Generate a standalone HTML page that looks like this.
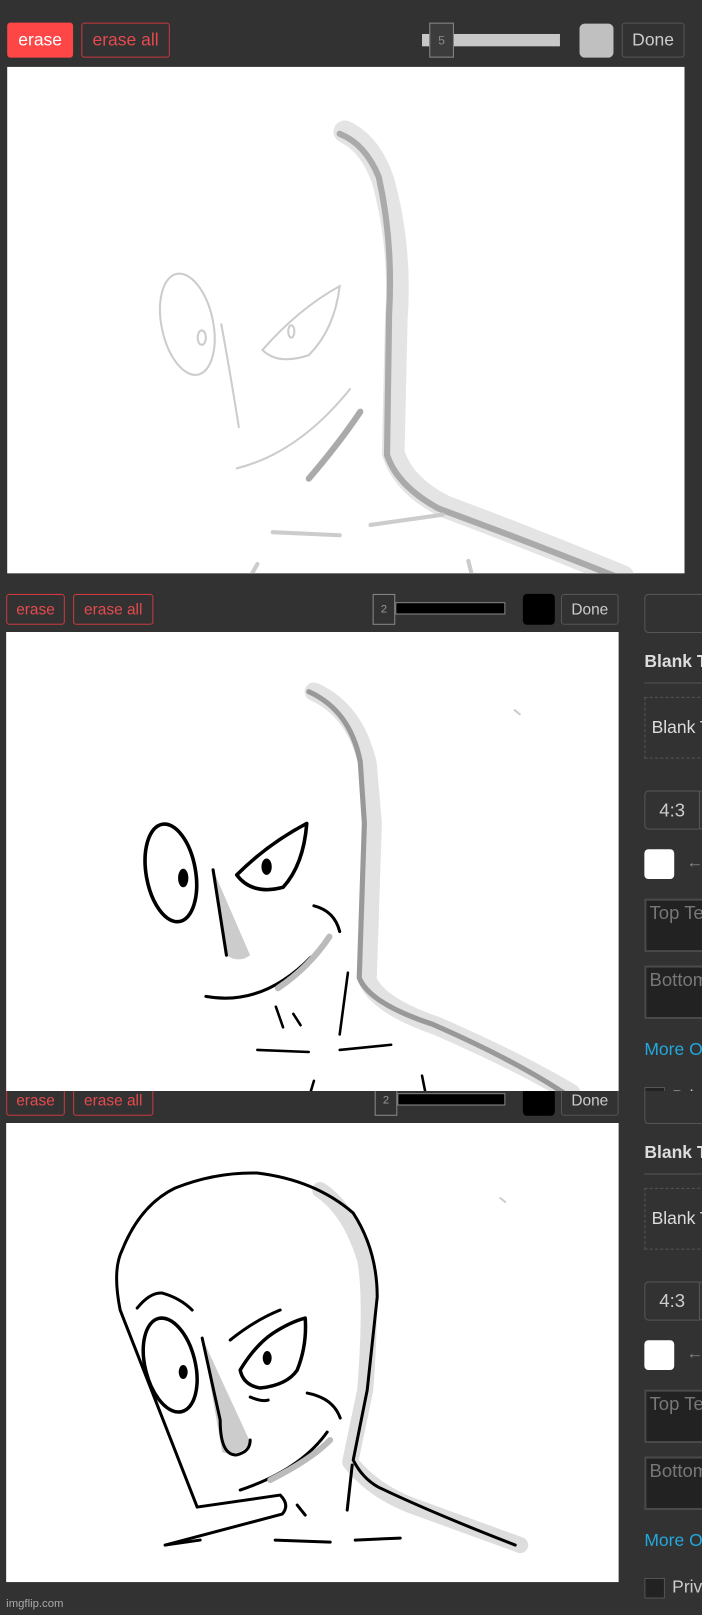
<!DOCTYPE html>
<html><head><meta charset="utf-8"><style>
*{box-sizing:border-box;margin:0;padding:0}
body{width:702px;height:1615px;background:#323232;overflow:hidden;font-family:"Liberation Sans",sans-serif}
#w{position:absolute;left:0;top:0;width:682px;height:1569px;transform:scale(1.02933);transform-origin:0 0}
.a{position:absolute}
.btn{position:absolute;border:1px solid #555;border-radius:3px;color:#ccc;display:flex;align-items:center;justify-content:center}
.red{border-color:#c9393e;color:#e64a4e}
.cv{position:absolute;background:#fff;overflow:hidden}
.cv svg{position:absolute;left:0;top:0;width:100%;height:100%}
.panel{position:absolute;left:0;width:682px;height:520px}
.ta{position:absolute;left:626px;width:80px;height:52px;background:#222;border:2px solid #4a4a4a;color:#777;font-size:18px;padding:2px 3px;white-space:nowrap;overflow:hidden}
</style></head><body><div id="w">
<!-- bar 1 -->
<div class="btn" style="left:7px;top:22px;width:64px;height:34px;background:#ff4646;border-color:#ff4646;color:#fff;font-size:17px">erase</div>
<div class="btn red" style="left:79px;top:22px;width:86px;height:34px;font-size:17px">erase all</div>
<div class="a" style="left:410px;top:33px;width:134px;height:12px;background:#c8c8c8"></div>
<div class="a" style="left:417px;top:22px;width:24px;height:34px;border:1px solid #888;background:#3c3c3c;color:#888;font-size:12px;text-align:center;line-height:32px">5</div>
<div class="a" style="left:563px;top:23px;width:33px;height:33px;background:#c0c0c0;border-radius:5px"></div>
<div class="btn" style="left:604px;top:22px;width:61px;height:34px;font-size:17px">Done</div>
<div class="cv" style="left:7px;top:65px;width:658px;height:492px">
<svg viewBox="7 65 658 492" fill="none" stroke-linecap="round">
<path d="M335,128 Q360,140 372,175 Q390,240 385,310 L382,440 Q392,472 432,492 Q520,525 605,560" stroke="#e4e4e4" stroke-width="22"/>
<path d="M330,130 Q355,140 368,172 Q382,235 378,305 L376,442 Q386,472 426,494 Q515,527 598,560" stroke="#aaa" stroke-width="6"/>
<ellipse cx="182" cy="315" rx="25" ry="50" stroke="#ccc" stroke-width="2" transform="rotate(-12 182 315)"/>
<ellipse cx="196" cy="328" rx="4" ry="7" stroke="#ccc" stroke-width="2"/>
<path d="M255,340 Q290,300 330,278 Q325,320 300,345 Q270,355 255,340Z" stroke="#ccc" stroke-width="2"/>
<ellipse cx="283" cy="322" rx="3" ry="6" stroke="#ccc" stroke-width="2"/>
<path d="M215,315 Q225,370 232,415" stroke="#ccc" stroke-width="2"/>
<path d="M230,455 Q290,440 340,378" stroke="#ccc" stroke-width="2"/>
<path d="M300,465 Q330,430 350,400" stroke="#aaa" stroke-width="6"/>
<path d="M265,517 L330,520 M360,510 L430,500 M245,557 L250,548 M455,545 L458,557" stroke="#ccc" stroke-width="4"/>
</svg></div>

<!-- panel 2 -->
<div class="panel" style="top:558px;height:502px;overflow:hidden">
<div class="btn red" style="left:6px;top:19px;width:57px;height:30px;font-size:15px">erase</div>
<div class="btn red" style="left:71px;top:19px;width:78px;height:30px;font-size:15px">erase all</div>
<div class="a" style="left:384px;top:27px;width:107px;height:12px;background:#000;border:1px solid #888"></div>
<div class="a" style="left:362px;top:19px;width:22px;height:30px;border:1px solid #888;color:#999;font-size:11px;text-align:center;line-height:28px">2</div>
<div class="a" style="left:508px;top:19px;width:31px;height:30px;background:#000;border-radius:4px"></div>
<div class="btn" style="left:545px;top:19px;width:56px;height:30px;font-size:15px">Done</div>
<div class="cv" style="left:6px;top:56px;width:595px;height:446px">
<svg viewBox="6 614 595 446" fill="none" stroke-linecap="round" stroke-linejoin="round">
<path d="M305,672 Q345,690 357,742 L362,800 L357,952 Q367,977 425,997 Q505,1032 555,1062" stroke="#e2e2e2" stroke-width="18"/>
<path d="M300,672 Q340,690 350,740 L354,800 L349,950 Q359,975 420,995 Q500,1030 548,1062" stroke="#999" stroke-width="5"/>
<path d="M500,690 L505,694" stroke="#ccc" stroke-width="2"/>
<ellipse cx="166" cy="848" rx="24" ry="48" stroke="#000" stroke-width="3.5" transform="rotate(-10 166 848)"/>
<ellipse cx="178" cy="853" rx="5" ry="9" fill="#000"/>
<path d="M230,850 Q260,820 298,800 Q295,840 275,862 Q245,870 230,850Z" stroke="#000" stroke-width="3.5"/>
<ellipse cx="259" cy="842" rx="5" ry="8" fill="#000"/>
<path d="M207,845 L220,928 Q232,936 243,928 Z" fill="#ccc" stroke="none"/>
<path d="M207,845 L220,928" stroke="#000" stroke-width="3"/>
<path d="M200,968 Q255,978 302,930" stroke="#000" stroke-width="3"/>
<path d="M270,960 Q300,940 320,910" stroke="#bbb" stroke-width="6"/>
<path d="M305,880 Q325,885 330,905" stroke="#000" stroke-width="3"/>
<path d="M338,945 L330,1005 M250,1020 L300,1022 M330,1020 L380,1015 M268,978 L275,998 M285,985 L292,996 M410,1045 L413,1060 M305,1050 L302,1060" stroke="#000" stroke-width="2.5"/>
</svg></div>
<div class="btn" style="left:626px;top:19px;width:80px;height:38px;border-radius:4px"></div>
<div class="a" style="left:626px;top:75px;color:#ddd;font-weight:bold;font-size:17px;white-space:nowrap">Blank Template</div>
<div class="a" style="left:626px;top:105px;width:60px;height:1px;background:#555"></div>
<div class="a" style="left:626px;top:119px;width:80px;height:60px;border:1px dashed #555;color:#ddd;font-size:17px;padding:19px 6px;white-space:nowrap">Blank Template</div>
<div class="btn" style="left:626px;top:210px;width:54px;height:38px;font-size:18px;border-radius:4px 0 0 4px">4:3</div>
<div class="btn" style="left:679px;top:210px;width:30px;height:38px"></div>
<div class="a" style="left:626px;top:267px;width:29px;height:29px;background:#fff;border-radius:4px"></div>
<div class="a" style="left:667px;top:272px;color:#888;font-size:16px">←</div>
<div class="ta" style="top:315px">Top Text</div>
<div class="ta" style="top:380px">Bottom Text</div>
<div class="a" style="left:626px;top:452px;color:#22a8dc;font-size:17px;white-space:nowrap">More Options</div>
<div class="a" style="left:626px;top:498px;width:20px;height:20px;background:#222;border:1px solid #555"></div>
<div class="a" style="left:653px;top:498px;color:#ccc;font-size:17px">Private</div>
</div>

<!-- panel 3 -->
<div class="a" style="left:0;top:1060px;width:682px;height:509px;overflow:hidden;background:#323232">
<div class="panel" style="top:-25px">
<div class="btn red" style="left:6px;top:19px;width:57px;height:30px;font-size:15px">erase</div>
<div class="btn red" style="left:71px;top:19px;width:78px;height:30px;font-size:15px">erase all</div>
<div class="a" style="left:386px;top:27px;width:105px;height:12px;background:#000;border:1px solid #888"></div>
<div class="a" style="left:364px;top:19px;width:22px;height:30px;border:1px solid #888;color:#999;font-size:11px;text-align:center;line-height:28px">2</div>
<div class="a" style="left:508px;top:19px;width:31px;height:30px;background:#000;border-radius:4px"></div>
<div class="btn" style="left:545px;top:19px;width:56px;height:30px;font-size:15px">Done</div>
<div class="cv" style="left:6px;top:56px;width:595px;height:446px">
<svg viewBox="6.2 1123 612 459" fill="none" stroke-linecap="round" stroke-linejoin="round">
<path d="M320,1190 Q350,1210 365,1260 Q372,1300 365,1390 L350,1462 Q372,1490 410,1505 L520,1545" stroke="#ddd" stroke-width="16"/>
<path d="M197,1507 L120,1310 Q112,1270 122,1250 Q140,1205 175,1188 Q215,1172 257,1173 Q315,1180 353,1213 Q377,1250 377,1297 L367,1390 L353,1460 Q362,1478 378,1487 Q430,1512 515,1545" stroke="#000" stroke-width="3"/>
<path d="M197,1507 L280,1495 Q290,1505 282,1514 L165,1545" stroke="#000" stroke-width="3"/>
<path d="M137,1308 Q150,1292 162,1293 Q180,1298 192,1310" stroke="#000" stroke-width="3"/>
<path d="M230,1340 Q255,1320 280,1310" stroke="#000" stroke-width="3"/>
<ellipse cx="170" cy="1365" rx="25" ry="48" stroke="#000" stroke-width="3.5" transform="rotate(-14 170 1365)"/>
<ellipse cx="183" cy="1372" rx="4.5" ry="7" fill="#000"/>
<path d="M240,1370 Q255,1345 273,1333 Q290,1322 305,1318 Q307,1345 297,1370 Q287,1385 260,1388 Q243,1385 240,1370Z" stroke="#000" stroke-width="3.5"/>
<ellipse cx="267" cy="1358" rx="4.5" ry="7" fill="#000"/>
<path d="M202,1338 L222,1452 Q240,1458 250,1442 Z" fill="#ccc" stroke="none"/>
<path d="M202,1338 L220,1420 Q220,1455 236,1455 Q250,1452 250,1440" stroke="#000" stroke-width="3"/>
<path d="M240,1490 Q300,1470 327,1432" stroke="#000" stroke-width="3"/>
<path d="M270,1480 Q310,1460 330,1440" stroke="#bbb" stroke-width="6"/>
<path d="M307,1393 Q333,1398 340,1418 M250,1397 Q262,1402 268,1400 M352,1465 L347,1510 M297,1505 L305,1515" stroke="#000" stroke-width="3"/>
<path d="M165,1545 L200,1540 M275,1540 L330,1542 M355,1540 L400,1538" stroke="#000" stroke-width="3"/>
<path d="M500,1198 L505,1202" stroke="#ccc" stroke-width="2"/>
</svg></div>
<div class="btn" style="left:626px;top:19px;width:80px;height:38px;border-radius:4px"></div>
<div class="a" style="left:626px;top:75px;color:#ddd;font-weight:bold;font-size:17px;white-space:nowrap">Blank Template</div>
<div class="a" style="left:626px;top:105px;width:60px;height:1px;background:#555"></div>
<div class="a" style="left:626px;top:119px;width:80px;height:60px;border:1px dashed #555;color:#ddd;font-size:17px;padding:19px 6px;white-space:nowrap">Blank Template</div>
<div class="btn" style="left:626px;top:210px;width:54px;height:38px;font-size:18px;border-radius:4px 0 0 4px">4:3</div>
<div class="btn" style="left:679px;top:210px;width:30px;height:38px"></div>
<div class="a" style="left:626px;top:267px;width:29px;height:29px;background:#fff;border-radius:4px"></div>
<div class="a" style="left:667px;top:272px;color:#888;font-size:16px">←</div>
<div class="ta" style="top:315px">Top Text</div>
<div class="ta" style="top:380px">Bottom Text</div>
<div class="a" style="left:626px;top:452px;color:#22a8dc;font-size:17px;white-space:nowrap">More Options</div>
<div class="a" style="left:626px;top:498px;width:20px;height:20px;background:#222;border:1px solid #555"></div>
<div class="a" style="left:653px;top:497px;color:#ccc;font-size:17px">Private</div>
</div>
</div>
<div class="a" style="left:6px;top:1552px;color:#aaa;font-size:11px">imgflip.com</div>
</div></body></html>
